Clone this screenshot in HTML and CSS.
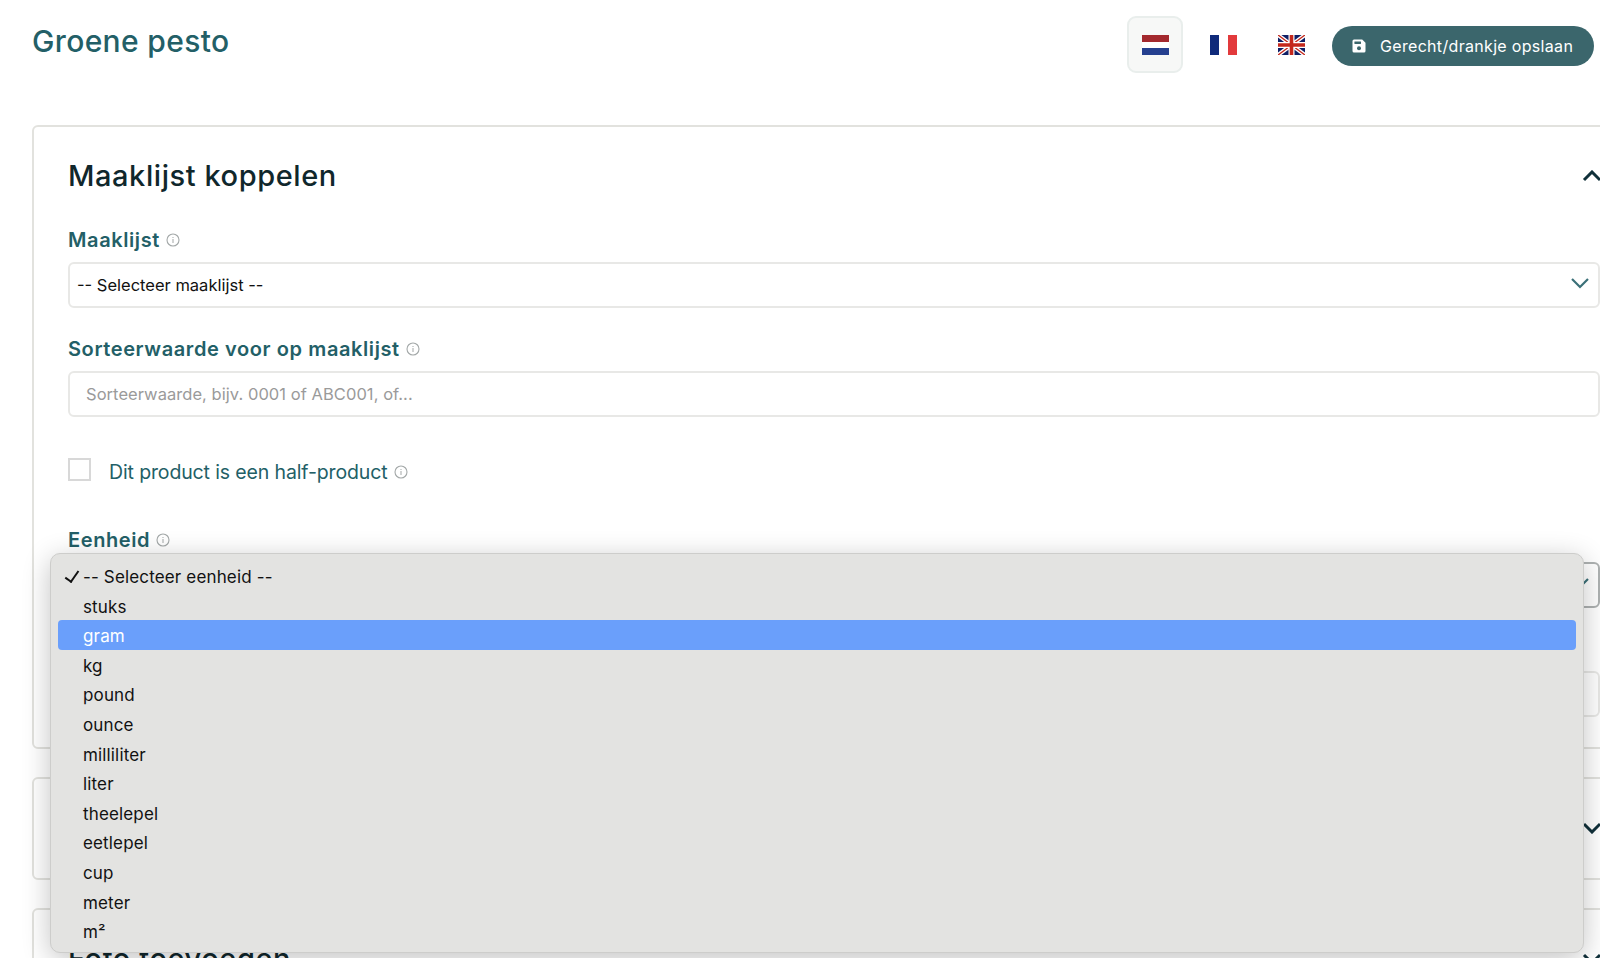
FILE: index.html
```html
<!DOCTYPE html>
<html lang="nl">
<head>
<meta charset="utf-8">
<title>Groene pesto</title>
<link rel="stylesheet" href="styles.css">
</head>
<body>
<svg class="defs" width="0" height="0" aria-hidden="true">
  <symbol id="info" viewBox="0 0 14 14"><circle cx="7" cy="7" r="6" fill="none" stroke="#a3a8a8" stroke-width="1.1"/><rect x="6.5" y="6" width="1" height="4" fill="#a3a8a8"/><rect x="6.5" y="4" width="1" height="1" fill="#a3a8a8"/></symbol>
  <symbol id="down" viewBox="0 0 20 12"><path d="M2 2l8 8 8-8" fill="none" stroke="currentColor" stroke-width="3"/></symbol>
  <symbol id="up" viewBox="0 0 20 12"><path d="M2 10l8-8 8 8" fill="none" stroke="currentColor" stroke-width="3"/></symbol>
  <symbol id="select-down" viewBox="0 0 20 12"><path d="M2 2l8 8 8-8" fill="none" stroke="currentColor" stroke-width="2.2"/></symbol>
</svg>
<div class="page">
  <header class="topbar">
    <h1 class="title">Groene pesto</h1>
    <div class="actions">
      <div class="flag-btn active">
        <svg class="flag" viewBox="0 0 27 20"><rect width="27" height="7" fill="#a3292e"/><rect y="7" width="27" height="6" fill="#fff"/><rect y="13" width="27" height="7" fill="#25408f"/></svg>
      </div>
      <div class="flag-btn">
        <svg class="flag" viewBox="0 0 27 20"><rect width="9" height="20" fill="#0f2a7a"/><rect x="9" width="9" height="20" fill="#fff"/><rect x="18" width="9" height="20" fill="#e23a3c"/></svg>
      </div>
      <div class="flag-btn">
        <svg class="flag" viewBox="0 0 27 20"><rect width="27" height="20" fill="#0f1f66"/><path d="M0 0l27 20M27 0L0 20" stroke="#fff" stroke-width="4"/><path d="M0 0l27 20M27 0L0 20" stroke="#c4281c" stroke-width="1.4"/><path d="M13.5 0v20M0 10h27" stroke="#fff" stroke-width="6"/><path d="M13.5 0v20M0 10h27" stroke="#c4281c" stroke-width="3.6"/></svg>
      </div>
      <button class="save" type="button">
        <svg class="save-icon" viewBox="0 0 14 14"><path d="M2 0.5h8.2L13.5 3.8V12a1.5 1.5 0 0 1-1.5 1.5H2A1.5 1.5 0 0 1 .5 12V2A1.5 1.5 0 0 1 2 .5z" fill="#fff"/><rect x="2.4" y="2.4" width="6.6" height="2.6" rx=".4" fill="#3b666c"/><circle cx="7" cy="9.2" r="2" fill="#3b666c"/></svg>
        <span>Gerecht/drankje opslaan</span>
      </button>
    </div>
  </header>

  <main class="panels">
    <section class="panel">
      <div class="panel-head">
        <h2 class="panel-title">Maaklijst koppelen</h2>
        <svg class="chev"><use href="#up"/></svg>
      </div>
      <div class="fields">
        <div class="field">
          <label class="label">Maaklijst <svg class="info"><use href="#info"/></svg></label>
          <div class="select"><span>-- Selecteer maaklijst --</span><svg class="sel-chev"><use href="#select-down"/></svg></div>
        </div>
        <div class="field">
          <label class="label">Sorteerwaarde voor op maaklijst <svg class="info"><use href="#info"/></svg></label>
          <input class="input" type="text" placeholder="Sorteerwaarde, bijv. 0001 of ABC001, of...">
        </div>
        <div class="check-row">
          <span class="checkbox"></span>
          <span class="check-label">Dit product is een half-product</span>
          <svg class="info"><use href="#info"/></svg>
        </div>
        <div class="field">
          <label class="label">Eenheid <svg class="info"><use href="#info"/></svg></label>
          <div class="select focused"><span></span><svg class="sel-chev"><use href="#select-down"/></svg></div>
        </div>
        <div class="field">
          <div class="label"></div>
          <input class="input" type="text">
        </div>
      </div>
    </section>
    <section class="panel">
      <div class="panel-head">
        <h2 class="panel-title"></h2>
        <svg class="chev"><use href="#down"/></svg>
      </div>
    </section>
    <section class="panel">
      <div class="panel-head">
        <h2 class="panel-title">Foto toevoegen</h2>
        <svg class="chev"><use href="#down"/></svg>
      </div>
    </section>
  </main>
</div>

<ul class="menu">
  <li class="opt checked">-- Selecteer eenheid --</li>
  <li class="opt">stuks</li>
  <li class="opt hover">gram</li>
  <li class="opt">kg</li>
  <li class="opt">pound</li>
  <li class="opt">ounce</li>
  <li class="opt">milliliter</li>
  <li class="opt">liter</li>
  <li class="opt">theelepel</li>
  <li class="opt">eetlepel</li>
  <li class="opt">cup</li>
  <li class="opt">meter</li>
  <li class="opt">m²</li>
</ul>
</body>
</html>
```
FILE: styles.css
```css
* { box-sizing: border-box; }
html, body { margin: 0; height: 958px; overflow: hidden; background: #fff; }
body { font-family: "Inter", "Noto Sans", sans-serif; position: relative; }
.defs { position: absolute; }

.page { padding-left: 32px; }

.topbar {
  display: flex;
  justify-content: space-between;
  align-items: flex-start;
  height: 125px;
  padding-right: 6px;
  padding-top: 16px;
}
.title {
  margin: 5px 0 0 0;
  font-size: 30px;
  line-height: 40px;
  font-weight: 500;
  letter-spacing: .35px;
  color: #235f67;
}
.actions { display: flex; align-items: center; }
.flag-btn {
  width: 56px;
  height: 57px;
  margin-right: 12px;
  display: flex;
  align-items: center;
  justify-content: center;
  border: 2px solid transparent;
  border-radius: 9px;
}
.flag-btn.active { background: #f7f8f7; border-color: #e9eeec; }
.flag { width: 27px; height: 20px; display: block; }
.save {
  width: 262px;
  height: 40px;
  margin: 2px 0 0 1px;
  padding: 0 0 0 20px;
  display: flex;
  align-items: center;
  gap: 14px;
  border: 0;
  border-radius: 20px;
  background: #3b666c;
  color: #fff;
  font: 400 16px "Inter", sans-serif;
  letter-spacing: .32px;
}
.save-icon { width: 14px; height: 14px; }

.panels { display: flex; flex-direction: column; gap: 28px; width: 1600px; }
.panel {
  border: 2px solid #e2e2de;
  border-radius: 6px;
  padding: 29px 30px 30px 34px;
  background: #fff;
}
.panel-head { display: flex; justify-content: space-between; align-items: center; height: 40px; }
.panel-title { margin: 0; font-size: 29px; line-height: 40px; font-weight: 500; letter-spacing: .57px; color: #10272c; }
.chev { width: 20px; height: 12px; margin-right: -2px; color: #10303a; }

.fields { display: flex; flex-direction: column; gap: 27px; margin-top: 30px; }
.label {
  display: flex;
  align-items: center;
  gap: 6px;
  height: 28px;
  margin-bottom: 8px;
  font-size: 20px;
  font-weight: 600;
  letter-spacing: .6px;
  color: #235f67;
}
.info { width: 14px; height: 14px; flex: none; }
.select, .input {
  display: flex;
  align-items: center;
  justify-content: space-between;
  width: 100%;
  height: 46px;
  border: 2px solid #e8e8e6;
  border-radius: 6px;
  background: #fff;
}
.select {
  padding: 0 8px 0 7px;
  font-size: 16.5px;
  color: #111;
}
.select.focused { border-color: #aeb2b2; }
.sel-chev { width: 20px; height: 12px; margin-bottom: 5px; color: #3b7078; }
.input { padding: 0 16px; font: 400 16.5px "Inter", sans-serif; letter-spacing: .05px; outline: 0; }
.input::placeholder { color: #9a9a9a; opacity: 1; }

.check-row { display: flex; align-items: center; height: 55px; font-size: 19.5px; letter-spacing: -.13px; color: #235f67; }
.checkbox { width: 23px; height: 23px; margin: 0 18px 4px 0; border: 2px solid #d8d8d8; }
.check-label { margin-right: 7px; }

.menu {
  position: absolute;
  left: 50px;
  top: 553px;
  width: 1534px;
  height: 400px;
  margin: 0;
  padding: 7px 7px;
  list-style: none;
  background: #e3e3e1;
  border: 1px solid #cdcdcb;
  border-radius: 10px;
  box-shadow: 0 6px 28px rgba(0, 0, 0, .24);
  font-size: 17px;
  letter-spacing: .15px;
  color: #111;
}
.opt { height: 29.6px; padding: 4px 0 0 25px; line-height: 25.6px; border-radius: 4px; position: relative; }
.opt.hover { background: #6a9ffb; color: #fff; }
.opt.checked::before {
  content: "";
  position: absolute;
  left: 10px;
  top: 7px;
  width: 6px;
  height: 12px;
  border: solid #111;
  border-width: 0 2.2px 2.2px 0;
  transform: rotate(35deg);
}
```
